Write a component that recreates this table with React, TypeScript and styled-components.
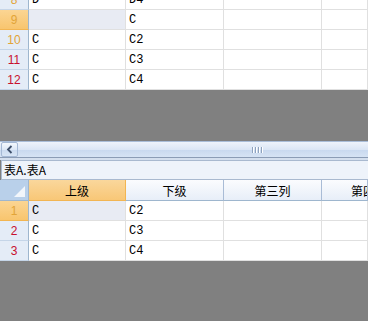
import React from "react";
import styled, { createGlobalStyle } from "styled-components";

const Global = createGlobalStyle`
  html, body { margin: 0; padding: 0; }
  body {
    width: 368px; height: 321px; overflow: hidden; background: #808080;
    font-family: "Liberation Sans", "Noto Sans CJK SC", sans-serif;
    font-size: 12px;
  }
`;

const Page = styled.div`
  width: 368px;
  height: 321px;
  display: flex;
  flex-direction: column;
  background: #808080;
  overflow: hidden;
`;

const TopViewport = styled.div`
  height: 141px;
  overflow: hidden;
  flex: none;
`;

const Rows = styled.div<{ $offset?: number }>`
  display: flex;
  flex-direction: column;
  margin-top: ${(p) => p.$offset ?? 0}px;
`;

const Row = styled.div`
  display: grid;
  grid-template-columns: 29px 97px 98px 98px 1fr;
  height: 20px;
  background: #fff;
`;

const RowHead = styled.div<{ $sel?: boolean; $color: string }>`
  box-sizing: border-box;
  display: flex;
  align-items: center;
  justify-content: center;
  border-right: 1px solid #9eb6ce;
  border-bottom: 1px solid ${(p) => (p.$sel ? "#f2b552" : "#c5d5e8")};
  background: ${(p) => (p.$sel ? "linear-gradient(#fbd593, #f8c56e)" : "#e4ecf7")};
  color: ${(p) => p.$color};
  font-family: "Liberation Sans", sans-serif;
  font-size: 12px;
  padding-top: 1px;
`;

const Cell = styled.div<{ $hl?: boolean }>`
  box-sizing: border-box;
  border-right: 1px solid #e0e0e0;
  border-bottom: 1px solid #e0e0e0;
  background: ${(p) => (p.$hl ? "#e8ebf3" : "#fff")};
  padding: 3px 0 0 3px;
  color: #000;
  font-family: "Liberation Mono", monospace;
  font-size: 12px;
  line-height: 15px;
  white-space: nowrap;
  overflow: hidden;
`;

const ScrollBar = styled.div`
  height: 16px;
  flex: none;
  display: flex;
  background: linear-gradient(#eef3fb, #dbe6f5 50%, #c9d9ef 55%, #d6e3f4);
  border-top: 1px solid #a9bdd8;
  box-sizing: border-box;
`;

const ArrowBtn = styled.div`
  width: 17px;
  box-sizing: border-box;
  border: 1px solid #a5b9d5;
  border-radius: 2px;
  margin: 0 0 0 1px;
  background: linear-gradient(#f4f8fd, #dde8f6 50%, #cbdbf0 55%, #d8e5f5);
  display: flex;
  align-items: center;
  justify-content: center;
`;

const Thumb = styled.div`
  flex: 1;
  display: flex;
  align-items: center;
  justify-content: center;
  padding-left: 128px;
`;

const Grip = styled.div`
  display: flex;
  gap: 1px;
  & > span {
    width: 1px;
    height: 6px;
    background: #8ea2bd;
    border-right: 1px solid #fff;
  }
`;

const Separator = styled.div`
  height: 3px;
  flex: none;
  background: #d4dfee;
  border-top: 1px solid #8b9cb5;
  box-sizing: border-box;
`;

const Caption = styled.div`
  height: 20px;
  flex: none;
  box-sizing: border-box;
  background: #eef3fa;
  border: 1px solid #a9b9cf;
  border-right: none;
  margin-left: 1px;
  display: flex;
  align-items: center;
  padding-left: 2px;
  font-family: "Noto Sans CJK SC", sans-serif;
  font-size: 12px;
  color: #000;
  line-height: 1;
`;

const HeaderRow = styled.div`
  display: grid;
  grid-template-columns: 29px 97px 98px 98px 1fr;
  height: 21px;
  flex: none;
`;

const Corner = styled.div`
  box-sizing: border-box;
  background: #b9d0ea;
  border-right: 1px solid #9eb6ce;
  border-bottom: 1px solid #9eb6ce;
  position: relative;
  &::after {
    content: "";
    position: absolute;
    right: 3px;
    bottom: 3px;
    width: 0;
    height: 0;
    border-left: 11px solid transparent;
    border-bottom: 11px solid #f2f6fb;
  }
`;

const ColHead = styled.div<{ $sel?: boolean }>`
  box-sizing: border-box;
  display: flex;
  align-items: center;
  justify-content: center;
  border-right: 1px solid ${(p) => (p.$sel ? "#f2b552" : "#a9bcd6")};
  border-bottom: 1px solid ${(p) => (p.$sel ? "#f2b552" : "#9eb6ce")};
  background: ${(p) =>
    p.$sel ? "linear-gradient(#fad79c, #f8c777)" : "linear-gradient(#fbfcfe, #e7eef8)"};
  font-family: "Noto Sans CJK SC", sans-serif;
  font-size: 12px;
  color: #000;
  white-space: nowrap;
  overflow: hidden;
`;

const LastHead = styled(ColHead)`
  justify-content: flex-start;
  padding-left: 29px;
`;

type R = { n: number; a: string; b: string; sel?: boolean; color: string };

const topRows: R[] = [
  { n: 8, a: "D", b: "D4", color: "#e2a437" },
  { n: 9, a: "", b: "C", sel: true, color: "#e2a437" },
  { n: 10, a: "C", b: "C2", color: "#e2a437" },
  { n: 11, a: "C", b: "C3", color: "#c8102e" },
  { n: 12, a: "C", b: "C4", color: "#c8102e" },
];

const bottomRows: R[] = [
  { n: 1, a: "C", b: "C2", sel: true, color: "#e2a437" },
  { n: 2, a: "C", b: "C3", color: "#c8102e" },
  { n: 3, a: "C", b: "C4", color: "#c8102e" },
];

const GridRows = ({ rows, offset }: { rows: R[]; offset?: number }) => (
  <Rows $offset={offset}>
    {rows.map((r) => (
      <Row key={r.n}>
        <RowHead $sel={r.sel} $color={r.color}>{r.n}</RowHead>
        <Cell $hl={r.sel}>{r.a}</Cell>
        <Cell>{r.b}</Cell>
        <Cell />
        <Cell />
      </Row>
    ))}
  </Rows>
);

export default function App() {
  return (
    <Page>
      <Global />
      <TopViewport>
        <GridRows rows={topRows} offset={-10} />
      </TopViewport>
      <ScrollBar>
        <ArrowBtn>
          <svg width="8" height="9" viewBox="0 0 8 9">
            <path d="M5.5 1 L2 4.5 L5.5 8" fill="none" stroke="#3d4f6a" strokeWidth="1.8" />
          </svg>
        </ArrowBtn>
        <Thumb>
          <Grip>
            <span />
            <span />
            <span />
            <span />
          </Grip>
        </Thumb>
      </ScrollBar>
      <Separator />
      <Caption>表A.表A</Caption>
      <HeaderRow>
        <Corner />
        <ColHead $sel>上级</ColHead>
        <ColHead>下级</ColHead>
        <ColHead>第三列</ColHead>
        <LastHead>第四列</LastHead>
      </HeaderRow>
      <GridRows rows={bottomRows} />
    </Page>
  );
}
